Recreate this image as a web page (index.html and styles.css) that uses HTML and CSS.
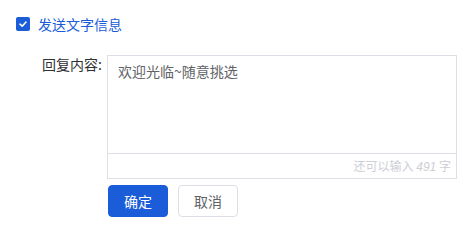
FILE: index.html
```html
<!DOCTYPE html>
<html lang="zh">
<head>
<meta charset="utf-8">
<link rel="stylesheet" href="styles.css">
</head>
<body>
<div class="page">
  <label class="check-row">
    <span class="checkbox">
      <svg width="10" height="10" viewBox="0 0 10 10"><path d="M2 5.2 L4.2 7.2 L8 3" fill="none" stroke="#fff" stroke-width="1.6" stroke-linecap="round" stroke-linejoin="round"/></svg>
    </span>
    <span class="check-text">发送文字信息</span>
  </label>
  <div class="form-row">
    <div class="label">回复内容:</div>
    <div class="field">
      <div class="editor">
        <textarea class="input">欢迎光临~随意挑选</textarea>
        <div class="counter">还可以输入 <i>491</i> 字</div>
      </div>
      <div class="actions">
        <button class="btn btn-primary">确定</button>
        <button class="btn">取消</button>
      </div>
    </div>
  </div>
</div>
</body>
</html>
```
FILE: styles.css
```css
html, body {
  margin: 0;
  background: #fff;
  font-family: "Noto Sans CJK SC", "Noto Sans", sans-serif;
  font-size: 14px;
  color: #606266;
}
.page {
  padding: 17px 0 0 16px;
}
.check-row {
  display: flex;
  align-items: center;
  gap: 8px;
  height: 14px;
}
.checkbox {
  width: 14px;
  height: 14px;
  border-radius: 2px;
  background: #1b5dd8;
  display: flex;
  align-items: center;
  justify-content: center;
}
.check-text {
  color: #1b5dd8;
  font-size: 14px;
  line-height: 14px;
}
.form-row {
  display: flex;
  margin-top: 24px;
}
.label {
  margin-left: 26px;
  width: 65px;
  line-height: 14px;
  padding-top: 2px;
  color: #303133;
}
.field {
  display: flex;
  flex-direction: column;
}
.editor {
  width: 348px;
  border: 1px solid #dcdfe6;
  display: flex;
  flex-direction: column;
}
.input {
  display: block;
  height: 98px;
  box-sizing: border-box;
  margin: 0;
  border: none;
  outline: none;
  resize: none;
  padding: 4px 10px;
  font-family: inherit;
  font-size: 14px;
  line-height: 22px;
  color: #606266;
  border-bottom: 1px solid #dcdfe6;
}
.counter {
  height: 24px;
  line-height: 24px;
  text-align: right;
  padding-right: 5px;
  font-size: 12px;
  color: #cdcfd5;
}
.counter i {
  font-family: "Liberation Sans", sans-serif;
}
.actions {
  display: flex;
  gap: 10px;
  margin-top: 6px;
  margin-left: 1px;
}
.btn {
  width: 60px;
  height: 32px;
  border: 1px solid #dcdfe6;
  border-radius: 4px;
  background: #fff;
  color: #606266;
  font-family: inherit;
  font-size: 14px;
  padding: 0;
}
.btn-primary {
  background: #1b5dd8;
  border-color: #1b5dd8;
  color: #fff;
}
```
